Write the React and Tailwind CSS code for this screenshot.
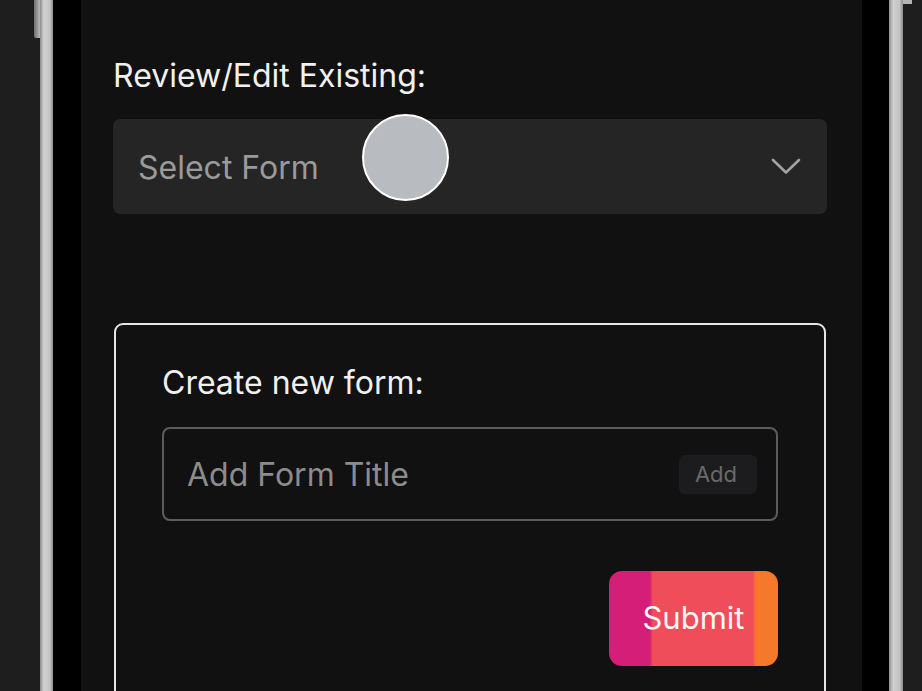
export default function App() {
  return (
    <div
      className="w-[922px] h-[691px] overflow-hidden flex bg-[#1e1e1e]"
      style={{ fontFamily: 'Inter, "Noto Sans", sans-serif' }}
    >
      {/* left outside + side button */}
      <div className="w-[40px] flex justify-end">
        <div className="w-[6px] h-[38px] bg-[linear-gradient(to_right,#6f6f6f,#b9b9b9)] rounded-bl-[2px]" />
      </div>
      <div className="w-[13px] bg-[linear-gradient(to_right,#8d8d8d,#d2d2d2_30%,#c6c6c6_75%,#8f8f8f)]" />
      <div className="w-[28px] bg-black" />

      {/* screen */}
      <div className="relative w-[781px] bg-[#111111] pl-[32px] pr-[35px] pt-[60px]">
        <h2 className="text-[32px] leading-[32px] text-[#f0f0f0]">Review/Edit Existing:</h2>

        <div className="mt-[27px] h-[95px] rounded-[7px] bg-[#252525] flex items-center justify-between pl-[25px] pr-[26px]">
          <span className="text-[32px] text-[#9a9a9a] pt-[2px]">Select Form</span>
          <svg width="30" height="17" viewBox="0 0 30 17" fill="none">
            <path d="M2 2l13 12.5L28 2" stroke="#a3a3a3" strokeWidth="2.6" strokeLinecap="round" strokeLinejoin="round" />
          </svg>
        </div>

        <div className="mt-[109px] mx-px h-[400px] rounded-[9px] border-2 border-[#e6e6e6] px-[46px] pt-[42px]">
          <h3 className="text-[32px] leading-[32px] text-[#f0f0f0]">Create new form:</h3>

          <div className="mt-[28px] h-[94px] rounded-[8px] border-2 border-[#5c5c5c] flex items-center justify-between pl-[23px] pr-[19px]">
            <span className="text-[32px] text-[#8c8c8c] pt-[2px]">Add Form Title</span>
            <button className="w-[78px] h-[39px] rounded-[6px] bg-[#1c1c1e] text-[22px] text-[#6a6a6a] pr-[4px]">
              Add
            </button>
          </div>

          <div className="mt-[50px] flex justify-end">
            <button className="w-[169px] h-[95px] rounded-[13px] bg-[linear-gradient(to_right,#d41e78_0,#d41e78_24%,#f04d5a_26%,#f04d5a_85%,#f6792b_87%)] text-[31px] text-[#f6f6f6]">
              Submit
            </button>
          </div>
        </div>

        {/* touch indicator */}
        <div className="absolute left-[281px] top-[114px] w-[87px] h-[87px] rounded-full bg-[#b8bcc0] border-2 border-white" />
      </div>

      <div className="w-[27px] bg-black" />
      <div className="w-[14px] bg-[linear-gradient(to_right,#8f8f8f,#cfcfcf_30%,#c4c4c4_75%,#8a8a8a)]" />
      <div className="flex-1">
        <div className="w-[9px] h-[4px] bg-[#b5b5b5]" />
      </div>
    </div>
  );
}
